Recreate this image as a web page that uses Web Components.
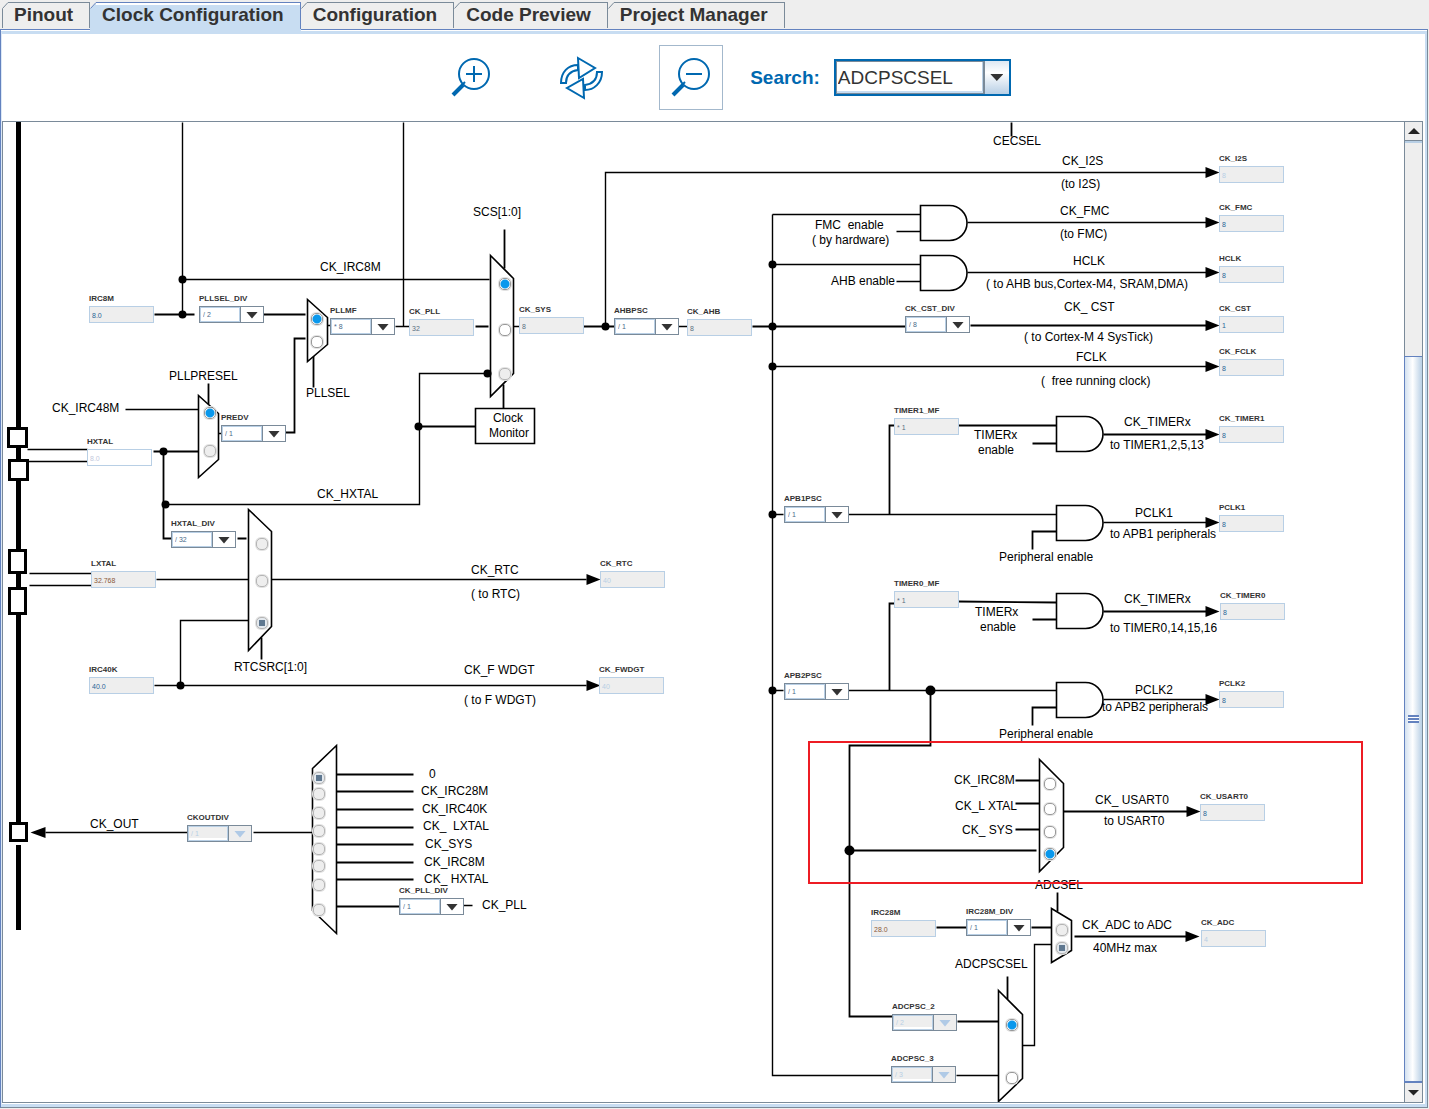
<!DOCTYPE html>
<html lang="en">
<head>
<meta charset="utf-8">
<title>Clock Configuration</title>
<style>
  html, body { height: 100%; margin: 0; }
  body { background: #eee; font-family: "Liberation Sans", Arial, sans-serif; color: #333; overflow: hidden; }
</style>
</head>
<body>
<clock-app>
  <tab-strip slot="tabs">
    <tab-item first>Pinout</tab-item>
    <tab-item selected>Clock Configuration</tab-item>
    <tab-item>Configuration</tab-item>
    <tab-item>Code Preview</tab-item>
    <tab-item>Project Manager</tab-item>
  </tab-strip>
  <tool-bar slot="tools"></tool-bar>
  <clock-diagram slot="canvas"></clock-diagram>
  <scroll-rail slot="rail"></scroll-rail>
</clock-app>

<script>
class BaseElement extends HTMLElement {
  connectedCallback() {
    if (this.shadowRoot) return;
    this.attachShadow({ mode: 'open' }).innerHTML = this.render();
  }
}

customElements.define('clock-app', class extends BaseElement {
  render() {
    return `<style>
      :host { display: flex; flex-direction: column; height: 100vh; box-sizing: border-box; padding-bottom: 1px; }
      .panel { flex: 1; min-height: 0; display: flex; flex-direction: column; box-sizing: border-box;
        margin-right: 1px; background: #fff; border: 1px solid #6382bf; border-right-color: #7a8a99; border-bottom-color: #7a8a99; }
      .inner { flex: 1; min-height: 0; display: flex; flex-direction: column; border-top: 3px solid #c8ddf2;
        margin-top: 1px; border-left: 1px solid #dce8f6; border-right: 2px solid #c8ddf2; border-bottom: 3px solid #c8ddf2; padding: 0 2px 1px 0; }
      .view { flex: 1; min-height: 0; display: flex; border: 1px solid #7a8a99; }
      ::slotted(clock-diagram) { flex: 1; min-width: 0; }
    </style>
    <slot name="tabs"></slot>
    <div class="panel"><div class="inner">
      <slot name="tools"></slot>
      <div class="view"><slot name="canvas"></slot><slot name="rail"></slot></div>
    </div></div>`;
  }
});

customElements.define('tab-strip', class extends BaseElement {
  render() {
    return `<style>
      :host { display: flex; height: 27px; padding: 2px 0 0 2px; position: relative; z-index: 1; }
    </style><slot></slot>`;
  }
});

customElements.define('tab-item', class extends BaseElement {
  render() {
    return `<style>
      :host { display: block; --edge: #7a8a99; }
      :host([selected]) { --edge: #6382bf; margin-bottom: -3px; background: linear-gradient(135deg, #eee 5px, #c8ddf2 5px); }
      button { all: unset; box-sizing: border-box; display: flex; align-items: flex-start; height: 26px; position: relative;
        padding: 2px 16px 0 12px; font: bold 19px/21px "Liberation Sans", Arial, sans-serif; color: #333;
        border-right: 1px solid var(--edge); background: linear-gradient(var(--edge), var(--edge)) 6px 0 / 100% 1px no-repeat; white-space: nowrap; }
      :host([selected]) button { height: 27px; background:
        linear-gradient(var(--edge), var(--edge)) 6px 0 / 100% 1px no-repeat, linear-gradient(#fff, #fff) 6px 1px / 100% 2px no-repeat; }
      :host([first]) button { border-left: 0; }
      svg { position: absolute; left: 0; top: 0; width: 7px; height: 26px; }
      path { fill: none; stroke: var(--edge); }
    </style>
    <button role="tab" aria-selected="${this.hasAttribute('selected')}">
      <svg aria-hidden="true"><path d="M6 .5L.5 6.5${this.hasAttribute('first') ? 'V26' : ''}"/></svg><slot></slot>
    </button>`;
  }
});

customElements.define('tool-bar', class extends BaseElement {
  render() {
    const lens = mark => `<svg width="40" height="40" viewBox="0 0 40 40"><circle cx="23" cy="16" r="15"/><path d="${mark}"/><path d="M12 27L2 37" stroke-width="4"/><path d="M14 24l-3 3" stroke-width="2"/></svg>`;
    return `<style>
      :host { display: flex; align-items: center; justify-content: center; height: 87px; box-sizing: border-box;
        padding-left: 25px; font: bold 19px/24px "Liberation Sans", Arial, sans-serif; color: #0068b0; }
      .tools { display: flex; gap: 46px; margin-right: 27px; }
      button { width: 64px; height: 65px; box-sizing: border-box; padding: 0; background: none; border: 1px solid transparent;
        display: flex; align-items: center; justify-content: center; }
      button.framed { border-color: #a3b8cc; }
      svg { fill: none; stroke: #0068b0; stroke-width: 2; }
      label { margin-right: 14px; }
      .combo { display: flex; width: 177px; height: 37px; box-sizing: border-box; border: 2px solid #0068b0; background: #fff; }
      select { appearance: none; flex: 1; min-width: 0; margin: 0; padding: 0 0 0 1px; border: 1px solid #7a8a99; box-shadow: inset 0 -2px #c8ddf2, inset -1px 0 #b8cfe5;
        border-radius: 0; background: #fff; color: #333; font: 19px "Liberation Sans", Arial, sans-serif; }
      .arrow { width: 24px; border-left: 1px solid #7a8a99; display: flex; align-items: center; justify-content: center;
        background: linear-gradient(#dde8f3, #fff 35%, #b8cfe5); }
      .arrow i { width: 13px; height: 7px; background: #333; clip-path: polygon(0 0, 100% 0, 50% 100%); }
    </style>
    <div class="tools">
      <button aria-label="Zoom in">${lens('M15 16h16M23 8v16')}</button>
      <button aria-label="Refresh"><svg width="43" height="44" viewBox="0 0 43 44"><path d="M1 27C1 16 8 9 18 9V14C11 15 6 19 6 27ZM42 16C42 27 34 34 25 34V29C32 28 37 24 37 16Z"/><path fill="#fff" d="M18 2L35 12L19 22ZM24 42L7 32L23 23Z"/></svg></button>
      <button class="framed" aria-label="Zoom out">${lens('M15 16h16')}</button>
    </div>
    <label for="search">Search:</label>
    <div class="combo"><select id="search"><option>ADCPSCSEL</option></select><span class="arrow"><i></i></span></div>`;
  }
});

customElements.define('scroll-rail', class extends BaseElement {
  render() {
    return `<style>
      :host { display: flex; flex-direction: column; width: 17px; border-left: 1px solid #7a8a99; background: #eee; }
      button { height: 19px; flex: none; padding: 0; border: 0; border-bottom: 1px solid #7a8a99; background: #eee;
        display: flex; align-items: center; justify-content: center; }
      button:last-child { border-bottom: 0; }
      i { width: 12px; height: 6px; background: #222; clip-path: polygon(0 0, 100% 0, 50% 100%); }
      .up i { transform: rotate(180deg); }
      .track { flex: 214; border-top: 2px solid #b8cfe5; }
      .thumb { flex: 728; margin-left: -1px; border: 1px solid #6382bf; border-right: 0; border-bottom-width: 2px;
        background: linear-gradient(90deg, #d3e1f0, #fff 45%, #b8cfe5); display: flex; align-items: center; justify-content: center; }
      .grip { width: 11px; height: 8px; background: repeating-linear-gradient(#6382bf 0 2px, #fff 2px 3px); }
    </style>
    <button class="up" aria-label="Scroll up"><i></i></button>
    <div class="track"></div><div class="thumb"><div class="grip"></div></div>
    <button aria-label="Scroll down"><i></i></button>`;
  }
});

/* A captioned read-only value box. */
customElements.define('clock-field', class extends BaseElement {
  render() {
    const a = n => this.getAttribute(n) || '';
    return `<style>
      :host { display: block; width: 65px; }
      label { display: block; font: bold 8px/10px "Liberation Sans", Arial, sans-serif; color: #333; margin-bottom: 2px; white-space: nowrap; }
      input { display: block; width: 100%; height: 17px; box-sizing: border-box; margin: 0; padding: 1px 2px 0; border: 1px solid #b8cfe5; border-radius: 0;
        background: #eee; color: #5a6e82; font: 7px "Liberation Sans", Arial, sans-serif; }
      :host([tone=faint]) input { color: #b8cfe5; }
      :host([tone=brown]) input { color: #8a5a3a; }
      :host([tone=blue]) input { color: #2a6496; }
      :host([tone=blank]) input { background: #fff; color: #c3c9dd; }
    </style>
    <label for="v">${a('name')}</label><input id="v" readonly value="${a('value')}">`;
  }
});

/* A captioned divider or multiplier drop-down. */
customElements.define('clock-select', class extends BaseElement {
  render() {
    const off = this.hasAttribute('disabled');
    return `<style>
      :host { display: block; width: 65px; --ink: #333; --fill: #fff; --text: #4a6a8a; }
      :host([disabled]) { --ink: #b0cae6; --fill: #eee; --text: #b8cfe5; }
      label { display: block; font: bold 8px/10px "Liberation Sans", Arial, sans-serif; color: #333; margin-bottom: 2px; white-space: nowrap; }
      .box { display: flex; height: 17px; box-sizing: border-box; border: 1px solid #7a8a99; background: var(--fill); }
      select { appearance: none; width: 40px; margin: 0; padding: 0 0 1px 2px; border: 1px solid #b8cfe5; border-radius: 0;
        background: var(--fill); color: var(--text); opacity: 1; font: 7px "Liberation Sans", Arial, sans-serif; }
      :host([disabled]) select { box-shadow: inset 0 -2px #fff; }
      span { flex: 1; border-left: 1px solid #7a8a99; display: flex; align-items: center; justify-content: center; padding-top: 1px; }
      i { width: 12px; height: 7px; background: var(--ink); clip-path: polygon(0 0, 100% 0, 50% 100%); }
    </style>
    <label for="v">${this.getAttribute('name')}</label>
    <div class="box"><select id="v" ${off ? 'disabled' : ''}><option>${this.getAttribute('value')}</option></select><span><i></i></span></div>`;
  }
});

/* All diagram coordinates share one origin: the canvas corner is at (3, 122). */
const OX = 3, OY = 122;

const FIELDS = [
  ['IRC8M', 89, 306, '8.0', 'blue'], ['CK_PLL', 409, 319, '32'], ['CK_SYS', 519, 317, '8'], ['CK_AHB', 687, 319, '8'],
  ['HXTAL', 87, 449, '8.0', 'blank'], ['LXTAL', 91, 571, '32.768', 'brown'], ['IRC40K', 89, 677, '40.0', 'blue'],
  ['CK_RTC', 600, 571, '40', 'faint'], ['CK_FWDGT', 599, 677, '40', 'faint'],
  ['CK_I2S', 1219, 166, '8', 'faint'], ['CK_FMC', 1219, 215, '8', 'blue'], ['HCLK', 1219, 266, '8', 'blue'],
  ['CK_CST', 1219, 316, '1', 'blue'], ['CK_FCLK', 1219, 359, '8', 'blue'], ['TIMER1_MF', 894, 418, '* 1'],
  ['CK_TIMER1', 1219, 426, '8', 'blue'], ['PCLK1', 1219, 515, '8', 'blue'], ['TIMER0_MF', 894, 591, '* 1'],
  ['CK_TIMER0', 1220, 603, '8', 'blue'], ['PCLK2', 1219, 691, '8', 'blue'], ['CK_USART0', 1200, 804, '8', 'blue'],
  ['IRC28M', 871, 920, '28.0', 'brown'], ['CK_ADC', 1201, 930, '4', 'faint']
];
const SELECTS = [
  ['PLLSEL_DIV', 199, 306, '/ 2'], ['PLLMF', 330, 318, '* 8'], ['AHBPSC', 614, 318, '/ 1'], ['CK_CST_DIV', 905, 316, '/ 8'],
  ['PREDV', 221, 425, '/ 1'], ['HXTAL_DIV', 171, 531, '/ 32'], ['APB1PSC', 784, 506, '/ 1'], ['APB2PSC', 784, 683, '/ 1'],
  ['CKOUTDIV', 187, 825, '/ 1', 1], ['CK_PLL_DIV', 399, 898, '/ 1'], ['IRC28M_DIV', 966, 919, '/ 1'],
  ['ADCPSC_2', 892, 1014, '/ 2', 1], ['ADCPSC_3', 891, 1066, '/ 3', 1]
];
/* mux name, centre x, then [centre y, flags]: c = chosen, d = disabled */
const MUXES = [
  ['PLLPRESEL', 210, [[413, 'c'], [451, 'd']]],
  ['PLLSEL', 317, [[319, 'c'], [342, '']]],
  ['SCS', 505, [[284, 'c'], [330, ''], [374, 'd']]],
  ['RTCSRC', 262, [[544, 'd'], [581, 'd'], [623, 'cd']]],
  ['CKOUTSEL', 319, [[778, 'cd'], [794, 'd'], [813, 'd'], [831, 'd'], [849, 'd'], [866, 'd'], [885, 'd'], [910, 'd']]],
  ['USART0SEL', 1050, [[784, ''], [809, ''], [832, ''], [854, 'c']]],
  ['ADCSEL', 1062, [[930, 'd'], [948, 'cd']]],
  ['ADCPSCSEL', 1012, [[1025, 'c'], [1078, '']]]
];
/* left x, middle y, text */
const LABELS = [
  [993, 141, 'CECSEL'], [1062, 161, 'CK_I2S'], [1061, 184, '(to I2S)'], [1060, 211, 'CK_FMC'], [1060, 234, '(to FMC)'],
  [1073, 261, 'HCLK'], [986, 284, '( to AHB bus,Cortex-M4, SRAM,DMA)'], [1064, 307, 'CK_ CST'], [1024, 337, '( to Cortex-M 4 SysTick)'],
  [1076, 357, 'FCLK'], [1041, 381, '(  free running clock)'], [815, 225, 'FMC  enable'], [812, 240, '( by hardware)'], [831, 281, 'AHB enable'],
  [473, 212, 'SCS[1:0]'], [320, 267, 'CK_IRC8M'], [169, 376, 'PLLPRESEL'], [306, 393, 'PLLSEL'], [52, 408, 'CK_IRC48M'],
  [493, 418, 'Clock'], [489, 433, 'Monitor'], [317, 494, 'CK_HXTAL'], [471, 570, 'CK_RTC'], [471, 594, '( to RTC)'],
  [234, 667, 'RTCSRC[1:0]'], [464, 670, 'CK_F WDGT'], [464, 700, '( to F WDGT)'], [1124, 422, 'CK_TIMERx'], [1110, 445, 'to TIMER1,2,5,13'],
  [974, 435, 'TIMERx'], [978, 450, 'enable'], [1135, 513, 'PCLK1'], [1110, 534, 'to APB1 peripherals'], [999, 557, 'Peripheral enable'],
  [1124, 599, 'CK_TIMERx'], [1110, 628, 'to TIMER0,14,15,16'], [975, 612, 'TIMERx'], [980, 627, 'enable'], [1135, 690, 'PCLK2'],
  [1102, 707, 'to APB2 peripherals'], [999, 734, 'Peripheral enable'], [90, 824, 'CK_OUT'], [429, 774, '0'], [421, 791, 'CK_IRC28M'],
  [422, 809, 'CK_IRC40K'], [423, 826, 'CK_  LXTAL'], [425, 844, 'CK_SYS'], [424, 862, 'CK_IRC8M'], [424, 879, 'CK_ HXTAL'], [482, 905, 'CK_PLL'],
  [954, 780, 'CK_IRC8M'], [955, 806, 'CK_L XTAL'], [962, 830, 'CK_ SYS'], [1095, 800, 'CK_ USART0'], [1104, 821, 'to USART0'],
  [1035, 885, 'ADCSEL'], [1082, 925, 'CK_ADC to ADC'], [1093, 948, '40MHz max'], [955, 964, 'ADCPSCSEL']
];
const THIN = `M403 122V326 M27 449H87 M28 461H87 M125 409H198 M218 433H221 M327 325H330 M395 326H409 M678 326H687
  M182 122V314 M182 279H489 M513 326H519 M29 573H91 M29 585H91 M772 514H783 M848 514H1056 M156 579H248 M248 620H180V685
  M154 685H586 M271 579H586 M45 832H187 M253 832H312 M605 326V172H1206 M772 214V1075H891 M772 366H1206 M896 231H920 M896 281H920
  M1103 522H1206 M772 690H783 M848 690H1056 M956 1075H998 M463 905H472 M1022 1045H1034V944H1051 M1103 699H1206
  M772 214H920 M772 264H920 M967 222H1206 M967 272H1206 M419 426V373H488 M165 504H419V426`;
const THICK = `M154 314H194 M263 314H305 M153 451H198 M163 451V538H171 M208 383V404 M285 432H294V338H305 M313 355V387
  M475 326H488 M504 229V268 M503 384V408 M583 326H614 M419 426H475 M752 326H905 M970 325H1206 M237 538H246 M261 637V659
  M889 514V425H894 M958 425H1056 M1032 443H1056 M1103 434H1206 M1032 549V531H1056 M889 690V603H894 M958 601L1056 602 M1032 619H1056
  M1103 611H1206 M1032 725V707H1056 M930 690V745H849V1016H892 M849 850H1036 M1015 780H1039 M1015 803H1039 M1015 829H1039
  M1063 811H1187 M1057 892V911 M936 927H966 M1031 927H1051 M1074 936H1186 M1007 976V999 M957 1021H998 M1011 122V136
  M336 774H413 M336 791H413 M336 809H413 M336 827H413 M336 844H413 M336 862H413 M336 879H413 M333 906H399`;
const SHAPES = ['M307 299L327 317V344L307 361Z', 'M490 255L513 278V373L490 396Z', 'M198 395L218 413V459L198 477Z',
  'M248 509L271 531V626L248 650Z', 'M1039 759L1063 783V847L1039 871Z', 'M1051 908L1071 920V950L1051 962Z',
  'M998 990L1022 1014V1078L998 1101Z', 'M336 745L312 768V910L336 933Z', 'M475 408H534V443H475Z']
  .concat([[920, 205], [920, 255], [1056, 416], [1056, 505], [1056, 593], [1056, 682]]
    .map(([x, y]) => `M${x} ${y}h29a17.5 17.5 0 0 1 0 35h-29Z`));
const ARROWS = [[1219, 172], [1219, 222], [1219, 272], [1219, 325], [1219, 366], [1219, 434], [1219, 522], [1219, 611], [1219, 699],
  [600, 579], [600, 685], [1200, 811], [1199, 936]];
const DOTS = [[182, 279], [182, 314], [163, 451], [165, 504], [487, 373], [418, 426], [605, 326], [772, 264], [772, 326], [772, 366],
  [772, 514], [772, 690], [180, 685], [930, 690, 5], [849, 850, 5]];
const PINS = [[8, 428, 18, 18], [9, 460, 18, 19], [9, 550, 16, 22], [9, 588, 16, 25], [10, 823, 16, 17]];

customElements.define('clock-diagram', class extends BaseElement {
  render() {
    const at = (x, y) => `style="left:${x - OX}px;top:${y - OY}px"`;
    return `<style>
      :host { display: block; position: relative; overflow: hidden; background: #fff; color: #000; }
      svg { position: absolute; left: 0; top: 0; width: 100%; height: 100%; fill: none; stroke: #000; overflow: visible; }
      clock-field, clock-select, .radio, .text { position: absolute; }
      .text { font: 12px/16px "Liberation Sans", Arial, sans-serif; white-space: pre; }
      .radio { appearance: none; width: 12px; height: 12px; margin: 0; box-sizing: border-box; border: 1px solid #999; border-radius: 5px;
        background: #fff; box-shadow: 0 0 0 1px #e2e2e2; }
      .radio:disabled { background: #eee; border-color: #b5b5b5; }
      .radio:checked { background: radial-gradient(circle, #0a98ec 4px, #fff 5px); }
      .radio:disabled:checked { background: linear-gradient(#5f7890, #5f7890) center / 6px 6px no-repeat #e4e9ee; }
    </style>
    <svg aria-hidden="true"><g transform="translate(${-OX} ${-OY})">
      <path d="M18.5 122V841M18.5 845V930" stroke-width="5"/>
      <g transform="translate(.5 .5)">
      <g fill="#fff" stroke-width="3">${PINS.map(([x, y, w, h]) => `<rect x="${x}" y="${y}" width="${w}" height="${h}"/>`).join('')}</g>
      <path d="${THIN}" stroke-width="1.4"/><path d="${THICK}" stroke-width="1.8"/>
      <path d="${SHAPES.join('')}" fill="#fff" stroke-width="1.6"/>
      <g fill="#000" stroke="none">
        ${DOTS.map(([x, y, r = 4]) => `<circle cx="${x}" cy="${y}" r="${r}"/>`).join('')}
        ${ARROWS.map(([x, y]) => `<path d="M${x} ${y}l-14-5.5v11z"/>`).join('')}
        <path d="M30 832l15-5.5v11z"/>
      </g>
      </g>
    </g></svg>
    ${LABELS.map(([x, y, t]) => `<span class="text" ${at(x, y - 8)}>${t}</span>`).join('')}
    ${FIELDS.map(([n, x, y, v, tone = '']) => `<clock-field name="${n}" value="${v}" tone="${tone}" ${at(x, y - 12)}></clock-field>`).join('')}
    ${SELECTS.map(([n, x, y, v, off]) => `<clock-select name="${n}" value="${v}" ${off ? 'disabled' : ''} ${at(x, y - 12)}></clock-select>`).join('')}
    ${MUXES.map(([n, x, list]) => list.map(([y, f], i) => `<input class="radio" type="radio" name="${n}" aria-label="${n} input ${i + 1}"
      ${f.includes('c') ? 'checked' : ''} ${f.includes('d') ? 'disabled' : ''} ${at(x - 6, y - 6)}>`).join('')).join('')}
    <svg aria-hidden="true" style="pointer-events:none"><rect x="${809 - OX}" y="${742 - OY}" width="553" height="141" stroke="#ed1c24" stroke-width="2"/></svg>`;
  }
});
</script>
</body>
</html>
